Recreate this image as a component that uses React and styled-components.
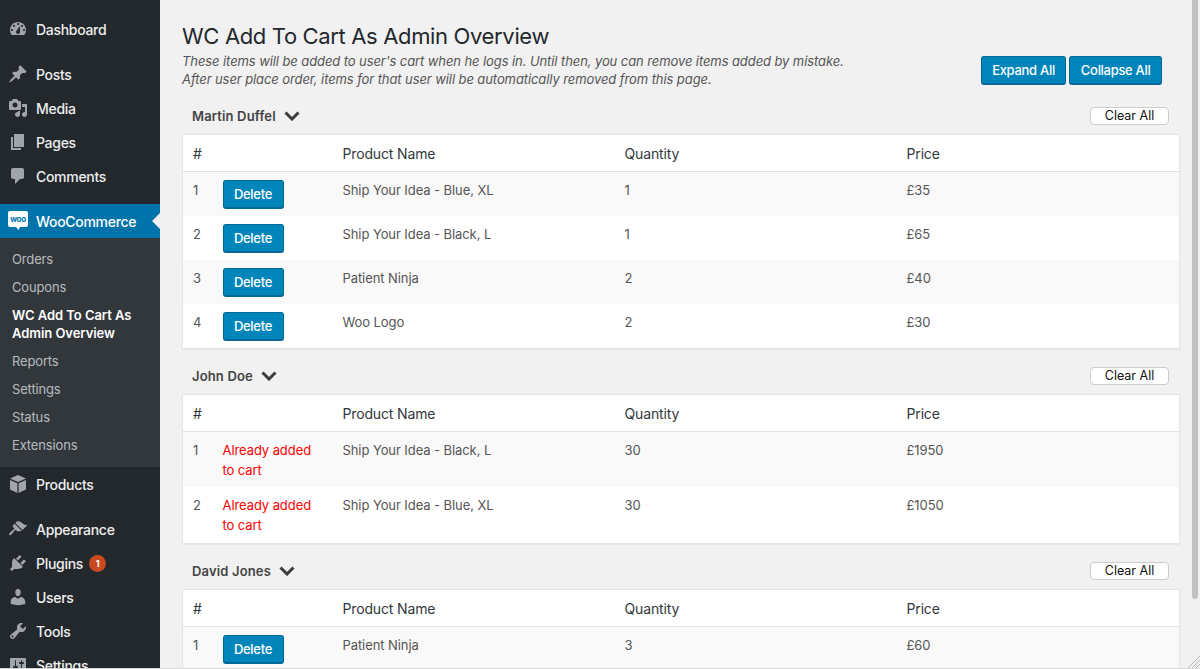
import React from "react";
import styled, { createGlobalStyle } from "styled-components";

const GlobalStyle = createGlobalStyle`
	html, body { margin: 0; padding: 0; height: 100%; overflow: hidden; }
	body {
		background: #f1f1f1;
		font-family: Inter, "Liberation Sans", sans-serif;
		color: #444;
		font-size: 13px;
	}
`;

const Page = styled.div`
	position: relative;
	display: flex;
	width: 1200px;
	height: 668px;
	overflow: hidden;
	border-bottom: 1px solid #d8d8d8;
`;

const Sidebar = styled.nav`
	width: 160px;
	flex: none;
	background: #23282d;
	padding-top: 12px;
	overflow: hidden;
`;

const MenuItem = styled.div`
	position: relative;
	display: flex;
	align-items: center;
	height: 34px;
	margin-bottom: ${(p) => (p.$gap ? "11px" : "0")};
	padding-left: 36px;
	color: #eee;
	font-size: 14px;
	font-weight: 500;
	letter-spacing: -0.3px;
	background: ${(p) => (p.$active ? "#0073aa" : "transparent")};
	${(p) => (p.$active ? "color: #fff;" : "")}
`;

const MenuIcon = styled.svg`
	position: absolute;
	left: 8px;
	top: 7px;
	width: 20px;
	height: 20px;
	fill: ${(p) => (p.$active ? "#fff" : "#a0a5aa")};
`;

const ActiveArrow = styled.span`
	position: absolute;
	right: 0;
	top: 9px;
	border: 8px solid transparent;
	border-right-color: #f1f1f1;
	border-left-width: 0;
`;

const Badge = styled.span`
	display: inline-flex;
	align-items: center;
	justify-content: center;
	width: 17px;
	height: 17px;
	margin-left: 6px;
	border-radius: 50%;
	background: #ca4a1f;
	color: #fff;
	font-size: 9px;
	font-weight: 700;
`;

const SubMenu = styled.div`
	background: #32373c;
	padding: 7px 0 8px;
`;

const SubItem = styled.div`
	padding: 5px 12px;
	font-size: 13px;
	line-height: 18px;
	letter-spacing: ${(p) => (p.$current ? "-0.05px" : "-0.15px")};
	color: ${(p) => (p.$current ? "#fff" : "rgba(240,245,250,.7)")};
	font-weight: ${(p) => (p.$current ? 600 : 400)};
`;

const Content = styled.main`
	flex: 1;
	min-width: 0;
	padding: 22px 20px 0 22px;
`;

const ScrollThumb = styled.div`
	position: absolute;
	top: 0;
	left: 1192px;
	width: 6px;
	height: 599px;
	border-radius: 0 0 3px 3px;
	background: #c1c1c1;
`;

const ResizeGrip = styled.svg`
	position: absolute;
	right: 0;
	bottom: 0;
	width: 12px;
	height: 12px;
`;

const Header = styled.header`
	display: flex;
	justify-content: space-between;
	align-items: flex-end;
	margin-bottom: 9px;
`;

const Title = styled.h1`
	margin: 0 0 1px;
	font-size: 22px;
	line-height: 29px;
	font-weight: 400;
	color: #23282d;
	letter-spacing: -0.35px;
`;

const Intro = styled.p`
	margin: 0;
	font-size: 13px;
	line-height: 18px;
	font-style: italic;
	letter-spacing: -0.09px;
	color: #555;
`;

const HeaderActions = styled.div`
	display: flex;
	gap: 3px;
	margin-right: 18px;
	margin-bottom: 3px;
`;

const PrimaryButton = styled.button`
	height: 29px;
	padding: 0 10.5px;
	border: 1px solid #006799;
	border-bottom-width: 2px;
	border-radius: 3px;
	background: #0085ba;
	color: #fff;
	font: 500 13px Inter, "Liberation Sans", sans-serif;
	letter-spacing: -0.3px;
`;

const UserBar = styled.div`
	display: flex;
	align-items: center;
	justify-content: space-between;
	height: 37px;
	padding: 0 11px 0 10px;
`;

const UserName = styled.div`
	display: flex;
	align-items: center;
	gap: 8px;
	font-weight: 600;
	font-size: 13px;
	letter-spacing: 0.15px;
	color: #444;
`;

const ClearButton = styled.button`
	width: 79px;
	height: 18px;
	padding: 0;
	border: 1px solid #ccc;
	border-radius: 4px;
	background: #fff;
	color: #111;
	font: 400 12.5px Inter, "Liberation Sans", sans-serif;
`;

const Table = styled.table`
	width: 998px;
	border-collapse: collapse;
	table-layout: fixed;
	background: #fff;
	border: 1px solid #e5e5e5;
	box-shadow: 0 1px 1px rgba(0, 0, 0, 0.04);
	margin-bottom: 8px;
`;

const HeadCell = styled.th`
	height: 36px;
	padding: 0 10px;
	text-align: left;
	font-size: 14px;
	font-weight: 400;
	letter-spacing: -0.15px;
	color: #32373c;
	border-bottom: 1px solid #e1e1e1;
`;

const Row = styled.tr`
	background: ${(p) => (p.$odd ? "#f9f9f9" : "#fff")};
`;

const Cell = styled.td`
	padding: 8px 10px 7px;
	vertical-align: top;
	font-size: 13px;
	line-height: 20px;
	letter-spacing: -0.08px;
	color: #555;
`;

const RowButton = styled(PrimaryButton)`
	width: 61px;
	padding: 0;
	display: block;
`;

const Added = styled.span`
	display: block;
	color: #f00;

	tr:last-child & {
		padding-bottom: 1px;
	}
`;

const icons = {
	dashboard: "M3.76 16h12.48c1.1-1.37 1.76-3.11 1.76-5 0-4.42-3.58-8-8-8s-8 3.58-8 8c0 1.89.66 3.63 1.76 5zM10 4c.55 0 1 .45 1 1s-.45 1-1 1-1-.45-1-1 .45-1 1-1zM6 6c.55 0 1 .45 1 1s-.45 1-1 1-1-.45-1-1 .45-1 1-1zm8 0c.55 0 1 .45 1 1s-.45 1-1 1-1-.45-1-1 .45-1 1-1zm-5.37 5.55L12 7v6c0 1.1-.9 2-2 2s-2-.9-2-2c0-.57.24-1.08.63-1.45zM4 10c.55 0 1 .45 1 1s-.45 1-1 1-1-.45-1-1 .45-1 1-1zm12 0c.55 0 1 .45 1 1s-.45 1-1 1-1-.45-1-1 .45-1 1-1z",
	posts: "M10.44 3.02l1.82-1.82 6.36 6.35-1.83 1.82c-1.05-.68-2.48-.57-3.41.36l-.75.75c-.92.93-1.04 2.35-.35 3.41l-1.83 1.82-2.41-2.41-2.8 2.79c-.42.42-3.38 2.71-3.8 2.29s1.86-3.39 2.28-3.81l2.79-2.79L4.1 9.36l1.83-1.82c1.05.69 2.48.57 3.4-.36l.75-.75c.93-.92 1.05-2.35.36-3.41z",
	media: "M13 11V4c0-.55-.45-1-1-1h-1.67L9 1H5L3.67 3H2c-.55 0-1 .45-1 1v7c0 .55.45 1 1 1h10c.55 0 1-.45 1-1zM7 4.500c1.380 0 2.500 1.120 2.500 2.500S8.380 9.500 7 9.500 4.500 8.380 4.500 7 5.620 4.500 7 4.500zM14 6h5v10.500c0 1.380-1.120 2.500-2.500 2.500S14 17.880 14 16.500s1.120-2.500 2.500-2.500c.17 0 .34.020.5.050V9h-3V6zm-4 8.050V13h2v3.500c0 1.380-1.120 2.500-2.500 2.500S7 17.880 7 16.500 8.120 14 9.500 14c.17 0 .34.020.5.050z",
	pages: "M6 15V2h10v13H6zm-1 1h8v2H3V5h2v11z",
	comments: "M5 2h9c1.100 0 2 .9 2 2v7c0 1.100-.9 2-2 2h-2l-5 5v-5H5c-1.100 0-2-.9-2-2V4c0-1.100.9-2 2-2z",
	box: "M10 1l8 3.500-8 3.500-8-3.500L10 1zM2 6l7.400 3.200V19L2 15.500V6zm16 0v9.500L10.600 19V9.200L18 6z",
	appearance: "M14.480 11.060L7.410 3.990l1.500-1.500c.5-.56 2.300-.47 3.510.32 1.210.8 1.430 1.280 2.910 2.100 1.180.64 2.450 1.260 4.450.85zm-.71.71L6.700 4.700 4.930 6.470c-.39.39-.39 1.020 0 1.410l1.060 1.060c.39.39.39 1.030 0 1.420-.6.6-1.430 1.110-2.210 1.690-.35.26-.7.53-1.010.84-1.430 1.430-2.240 2.520-1.600 3.160.64.64 1.730-.17 3.160-1.600.31-.31.58-.66.84-1.010.58-.78 1.090-1.610 1.690-2.210.39-.39 1.030-.39 1.420 0l1.060 1.060c.39.39 1.020.39 1.410 0z",
	plugins: "M13.110 4.360L9.870 7.600 8 5.730l3.240-3.240c.35-.34 1.050-.2 1.560.32.52.51.66 1.210.31 1.550zm-8 1.770l.91-1.120 9.010 9.010-1.190.84c-.71.71-2.630 1.160-3.820 1.160H6.140L4.900 17.260c-.59.59-1.540.59-2.120 0-.59-.58-.59-1.530 0-2.120l1.240-1.240v-3.880c0-1.130.4-3.190 1.090-3.890zm7.260 3.970l3.240-3.240c.34-.35 1.040-.21 1.550.31.52.51.66 1.210.31 1.550l-3.240 3.250z",
	users: "M10 9.250c-2.270 0-2.730-3.440-2.730-3.440C7 4.020 7.820 2 9.970 2c2.160 0 2.980 2.020 2.710 3.810 0 0-.41 3.440-2.680 3.440zm0 2.570L12.720 10c2.390 0 4.520 2.330 4.520 4.530v2.490s-3.650 1.130-7.240 1.130c-3.650 0-7.240-1.130-7.240-1.130v-2.490c0-2.250 1.940-4.480 4.470-4.480z",
	tools: "M16.680 9.770c-1.340 1.340-3.300 1.670-4.950.99l-5.410 6.520c-.99.99-2.590.99-3.580 0s-.99-2.590 0-3.570l6.520-5.420c-.68-1.650-.35-3.610.99-4.950 1.280-1.280 3.120-1.620 4.720-1.060l-2.890 2.890 2.820 2.820 2.860-2.870c.53 1.580.18 3.390-1.080 4.650zM3.810 16.210c.4.39 1.040.39 1.430 0 .4-.4.4-1.040 0-1.430-.39-.4-1.030-.4-1.430 0-.39.39-.39 1.030 0 1.430z",
	settings: "M18 16V4c0-.55-.45-1-1-1H3c-.55 0-1 .45-1 1v12c0 .55.45 1 1 1h14c.55 0 1-.45 1-1zM8 11h1c.55 0 1 .45 1 1s-.45 1-1 1H8v1.500c0 .28-.22.5-.5.5s-.5-.22-.5-.5V13H6c-.55 0-1-.45-1-1s.45-1 1-1h1V5.500c0-.28.22-.5.5-.5s.5.220.5.5V11zm5-2h-1c-.55 0-1-.45-1-1s.45-1 1-1h1V5.500c0-.28.22-.5.5-.5s.5.220.5.5V7h1c.55 0 1 .45 1 1s-.45 1-1 1h-1v5.500c0 .28-.22.5-.5.5s-.5-.22-.5-.5V9z",
};

function Icon({ name }) {
	return (
		<MenuIcon viewBox="0 0 20 20">
			<path d={icons[name]} />
		</MenuIcon>
	);
}

const WooIconBox = styled.svg`
	position: absolute;
	left: 8px;
	top: 7px;
	width: 20px;
	height: 20px;
`;

const WooText = styled.text`
	font-family: Inter, "Liberation Sans", sans-serif;
	font-size: 8px;
	font-weight: 700;
	letter-spacing: -0.3px;
	fill: #0073aa;
`;

function WooIcon() {
	return (
		<WooIconBox viewBox="0 0 20 20">
			<path d="M2 0h16a2 2 0 0 1 2 2v12a2 2 0 0 1-2 2h-6l-1.500 3-2.500-3H2a2 2 0 0 1-2-2V2a2 2 0 0 1 2-2z" fill="#fff" />
			<WooText x="10" y="10.500" textAnchor="middle">woo</WooText>
		</WooIconBox>
	);
}

const ChevronBox = styled.svg`
	width: 16px;
	height: 11px;
	flex: none;
	margin-top: -1px;
`;

function Chevron() {
	return (
		<ChevronBox viewBox="0 0 16 11">
			<path d="M1.500 2.500L8 9l6.500-6.500" fill="none" stroke="#3c3c3c" strokeWidth="3" />
		</ChevronBox>
	);
}

const groups = [
	{
		name: "Martin Duffel",
		rows: [
			["Ship Your Idea - Blue, XL", "1", "£35"],
			["Ship Your Idea - Black, L", "1", "£65"],
			["Patient Ninja", "2", "£40"],
			["Woo Logo", "2", "£30"],
		],
	},
	{
		name: "John Doe",
		added: true,
		rows: [
			["Ship Your Idea - Black, L", "30", "£1950"],
			["Ship Your Idea - Blue, XL", "30", "£1050"],
		],
	},
	{
		name: "David Jones",
		rows: [["Patient Ninja", "3", "£60"]],
	},
];

function CartGroup({ group }) {
	return (
		<section>
			<UserBar>
				<UserName>
					{group.name}
					<Chevron />
				</UserName>
				<ClearButton>Clear All</ClearButton>
			</UserBar>
			<Table>
				<colgroup>
					<col width="30" />
					<col width="120" />
					<col width="282" />
					<col width="282" />
					<col />
				</colgroup>
				<thead>
					<tr>
						<HeadCell>#</HeadCell>
						<HeadCell />
						<HeadCell>Product Name</HeadCell>
						<HeadCell>Quantity</HeadCell>
						<HeadCell>Price</HeadCell>
					</tr>
				</thead>
				<tbody>
					{group.rows.map((row, i) => (
						<Row key={i} $odd={i % 2 === 0}>
							<Cell>{i + 1}</Cell>
							<Cell>
								{group.added ? <Added>Already added to cart</Added> : <RowButton>Delete</RowButton>}
							</Cell>
							<Cell>{row[0]}</Cell>
							<Cell>{row[1]}</Cell>
							<Cell>{row[2]}</Cell>
						</Row>
					))}
				</tbody>
			</Table>
		</section>
	);
}

export default function App() {
	return (
		<>
			<GlobalStyle />
			<Page>
				<Sidebar>
					<MenuItem $gap><Icon name="dashboard" />Dashboard</MenuItem>
					<MenuItem><Icon name="posts" />Posts</MenuItem>
					<MenuItem><Icon name="media" />Media</MenuItem>
					<MenuItem><Icon name="pages" />Pages</MenuItem>
					<MenuItem $gap><Icon name="comments" />Comments</MenuItem>
					<MenuItem $active><WooIcon />WooCommerce<ActiveArrow /></MenuItem>
					<SubMenu>
						<SubItem>Orders</SubItem>
						<SubItem>Coupons</SubItem>
						<SubItem $current>WC Add To Cart As Admin Overview</SubItem>
						<SubItem>Reports</SubItem>
						<SubItem>Settings</SubItem>
						<SubItem>Status</SubItem>
						<SubItem>Extensions</SubItem>
					</SubMenu>
					<MenuItem $gap><Icon name="box" />Products</MenuItem>
					<MenuItem><Icon name="appearance" />Appearance</MenuItem>
					<MenuItem><Icon name="plugins" />Plugins<Badge>1</Badge></MenuItem>
					<MenuItem><Icon name="users" />Users</MenuItem>
					<MenuItem><Icon name="tools" />Tools</MenuItem>
					<MenuItem><Icon name="settings" />Settings</MenuItem>
				</Sidebar>
				<Content>
					<Header>
						<div>
							<Title>WC Add To Cart As Admin Overview</Title>
							<Intro>
								These items will be added to user's cart when he logs in. Until then, you can remove items added by mistake.
								<br />
								After user place order, items for that user will be automatically removed from this page.
							</Intro>
						</div>
						<HeaderActions>
							<PrimaryButton>Expand All</PrimaryButton>
							<PrimaryButton>Collapse All</PrimaryButton>
						</HeaderActions>
					</Header>
					{groups.map((g) => (
						<CartGroup key={g.name} group={g} />
					))}
				</Content>
				<ScrollThumb />
				<ResizeGrip viewBox="0 0 12 12">
					<path d="M0 12L12 0M4 12l8-8M8 12l4-4" stroke="#b5b5b5" strokeWidth="1" fill="none" />
				</ResizeGrip>
			</Page>
		</>
	);
}
